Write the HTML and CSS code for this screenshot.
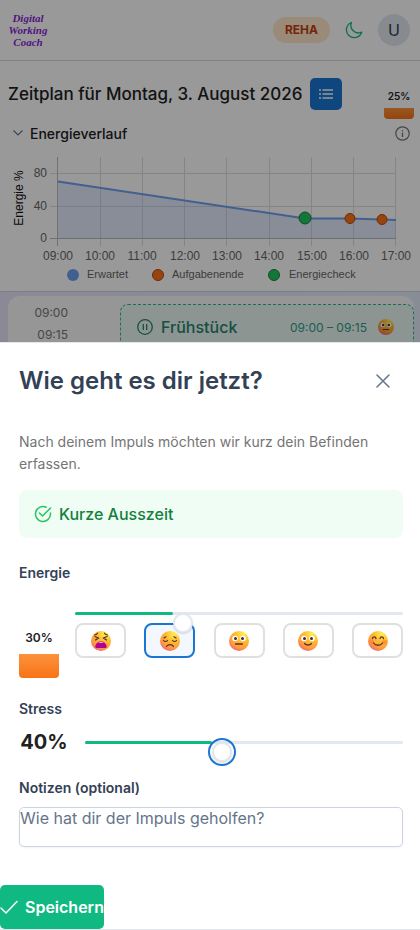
FILE: index.html
```html
<!DOCTYPE html>
<html lang="de">
<head>
    <meta charset="utf-8">
    <meta name="viewport" content="width=device-width, initial-scale=1">
    <title>Digital Working Coach</title>
    <link rel="stylesheet" href="styles.css">
</head>
<body>

    <!-- Emoji faces -->
    <svg class="sprite" aria-hidden="true">
        <defs>
            <radialGradient id="face" cx="0.7" cy="0.15" r="0.95">
                <stop offset="0" stop-color="#fff04e"/>
                <stop offset="0.45" stop-color="#ffb72e"/>
                <stop offset="0.75" stop-color="#ff9a3c"/>
                <stop offset="1" stop-color="#e8607c"/>
            </radialGradient>
            <symbol id="face-awful" viewBox="0 0 20 20">
                <circle cx="10" cy="10" r="10" fill="url(#face)"/>
                <path d="M4 5.500l3.500 1.500L4.500 9M16 5.500l-3.500 1.500 3 2M3.500 4c1.500-.3 2.500-.8 3-1.800M16.500 4c-1.500-.3-2.500-.8-3-1.800" fill="none" stroke="#4a2637" stroke-width="1.200" stroke-linecap="round"/>
                <path d="M5.500 17c-1 0-1.300-.6-1.200-1.400C4.600 12.600 7 10.500 10 10.500s5.400 2.100 5.700 5.100c.1.800-.2 1.400-1.200 1.400z" fill="#b5008f"/>
                <path d="M7 12c1.500-1 4.500-1 6 0z" fill="#fff"/>
            </symbol>
            <symbol id="face-sad" viewBox="0 0 20 20">
                <circle cx="10" cy="10" r="10" fill="url(#face)"/>
                <path d="M3.500 9.500c1 1.300 3 1.300 4 0M12.500 9.500c1 1.300 3 1.300 4 0M6.500 15.500c1.500-2.600 5.500-2.600 7 0M4 7l2-1.200M16 7l-2-1.200" fill="none" stroke="#5b3035" stroke-width="1.200" stroke-linecap="round"/>
            </symbol>
            <symbol id="face-neutral" viewBox="0 0 20 20">
                <circle cx="10" cy="10" r="10" fill="url(#face)"/>
                <circle cx="6" cy="7.500" r="2.800" fill="#fff"/>
                <circle cx="14" cy="7.500" r="2.800" fill="#fff"/>
                <circle cx="6.500" cy="7.500" r="1.500" fill="#4a2637"/>
                <circle cx="13.500" cy="7.500" r="1.500" fill="#4a2637"/>
                <path d="M6.500 13h7" stroke="#5b3035" stroke-width="1.300" stroke-linecap="round"/>
            </symbol>
            <symbol id="face-smile" viewBox="0 0 20 20">
                <circle cx="10" cy="10" r="10" fill="url(#face)"/>
                <circle cx="6" cy="7.500" r="2.800" fill="#fff"/>
                <circle cx="14" cy="7.500" r="2.800" fill="#fff"/>
                <circle cx="6.500" cy="7.500" r="1.500" fill="#4a2637"/>
                <circle cx="13.500" cy="7.500" r="1.500" fill="#4a2637"/>
                <path d="M6.500 12.500c1.700 2 5.300 2 7 0" fill="none" stroke="#5b3035" stroke-width="1.300" stroke-linecap="round"/>
            </symbol>
            <symbol id="face-happy" viewBox="0 0 20 20">
                <circle cx="10" cy="10" r="10" fill="url(#face)"/>
                <circle cx="3.500" cy="11" r="2.500" fill="#ff7a45" opacity="0.6"/>
                <circle cx="16.500" cy="11" r="2.500" fill="#ff7a45" opacity="0.6"/>
                <path d="M4.500 7.500c.4-2.300 3-2.300 3.500 0M12 7.500c.4-2.300 3-2.300 3.500 0M5.500 12c2 3 7 3 9 0" fill="none" stroke="#5b3035" stroke-width="1.300" stroke-linecap="round"/>
            </symbol>
        </defs>
    </svg>

    <header class="topbar">
        <a class="logo" href="#" aria-label="Digital Working Coach">
            <span>Digital</span>
            <span>Working</span>
            <span>Coach</span>
        </a>
        <div class="topbar-actions">
            <span class="tag">REHA</span>
            <button class="theme-btn" aria-label="Dunkelmodus">
                <svg width="18" height="18" viewBox="0 0 18 18"><path d="M6.500 1.500A7.800 7.800 0 1 0 16.700 11 7.400 7.400 0 0 1 6.500 1.500z" fill="none" stroke="currentColor" stroke-width="1.300" stroke-linejoin="round"/></svg>
            </button>
            <button class="avatar">U</button>
        </div>
    </header>

    <main>
        <section class="plan-head">
            <div class="plan-title">
                <h1>Zeitplan für Montag, 3. August 2026</h1>
                <button class="list-btn" aria-label="Liste">
                    <svg width="16" height="16" viewBox="0 0 16 16"><path d="M1 4h2M1 8h2M1 12h2M4.500 4H15M4.500 8H15M4.500 12H15" stroke="currentColor" stroke-width="1.500"/></svg>
                </button>
            </div>
            <div class="battery battery-small">
                <span>25%</span>
                <div class="battery-fill"></div>
            </div>
        </section>

        <section class="chart-panel">
            <div class="chart-head">
                <button class="toggle">
                    <svg width="10" height="6" viewBox="0 0 10 6"><path d="M0.500 0.500L5 5l4.500-4.500" fill="none" stroke="#64748b" stroke-width="1.200"/></svg>
                    Energieverlauf
                </button>
                <button class="info-btn" aria-label="Info">
                    <svg width="15" height="15" viewBox="0 0 15 15"><circle cx="7.500" cy="7.500" r="6.700" fill="none" stroke="currentColor" stroke-width="1.200"/><path d="M7.500 6.500V11M7.500 4v1.200" stroke="currentColor" stroke-width="1.300"/></svg>
                </button>
            </div>
            <svg class="chart" viewBox="0 0 420 141">
                <g stroke="#dedede">
                    <path d="M100.500 7v89M142.500 7v89M184.500 7v89M226.500 7v89M269.500 7v89M311.500 7v89M353.500 7v89M395.500 7v89"/>
                    <path d="M50 23.500h346M50 56.500h346"/>
                </g>
                <path d="M57.500 7v89M50 88.500h346" stroke="#bdbdbd"/>
                <path d="M58 31.500L305 68.500h45l46 1.500v18.500H58z" fill="#739fef" fill-opacity="0.200"/>
                <path d="M58 31.500L305 68.500h45l46 1.500" fill="none" stroke="#6f9ff2" stroke-width="2"/>
                <circle cx="305" cy="68" r="6" fill="#22c55e" stroke="#15803d"/>
                <circle cx="350" cy="68.500" r="5" fill="#f97316" stroke="#c2410c"/>
                <circle cx="382" cy="69.500" r="5" fill="#f97316" stroke="#c2410c"/>
                <text class="axis-title" transform="translate(23 48) rotate(-90)">Energie %</text>
                <g class="tick tick-y">
                    <text x="47" y="27">80</text>
                    <text x="47" y="60">40</text>
                    <text x="47" y="92">0</text>
                </g>
                <g class="tick tick-x">
                    <text x="58" y="110">09:00</text>
                    <text x="100" y="110">10:00</text>
                    <text x="142" y="110">11:00</text>
                    <text x="185" y="110">12:00</text>
                    <text x="227" y="110">13:00</text>
                    <text x="269" y="110">14:00</text>
                    <text x="312" y="110">15:00</text>
                    <text x="354" y="110">16:00</text>
                    <text x="396" y="110">17:00</text>
                </g>
                <g class="legend">
                    <circle cx="73" cy="125" r="6" fill="#6f9ff2"/>
                    <text x="87" y="128">Erwartet</text>
                    <circle cx="158" cy="125" r="5.500" fill="#f97316" stroke="#c2410c"/>
                    <text x="172" y="128">Aufgabenende</text>
                    <circle cx="274" cy="125" r="5.500" fill="#22c55e" stroke="#15803d"/>
                    <text x="289" y="128">Energiecheck</text>
                </g>
            </svg>
        </section>

        <section class="timeline">
            <div class="timeline-card">
                <div class="times">
                    <span>09:00</span>
                    <span>09:15</span>
                </div>
                <div class="entry">
                    <svg width="16" height="16" viewBox="0 0 16 16"><circle cx="8" cy="8" r="7.300" fill="none" stroke="currentColor" stroke-width="1.300"/><path d="M6.300 5v6M9.700 5v6" stroke="currentColor" stroke-width="1.300"/></svg>
                    <span class="entry-name">Frühstück</span>
                    <span class="entry-time">09:00 – 09:15</span>
                    <svg width="16" height="16"><use href="#face-neutral"/></svg>
                </div>
            </div>
        </section>
    </main>

    <div class="mask"></div>

    <!-- Check-in drawer -->
    <form class="drawer" role="dialog" aria-labelledby="drawer-title">
        <div class="drawer-head">
            <h2 id="drawer-title">Wie geht es dir jetzt?</h2>
            <button type="button" class="close-btn" aria-label="Schließen">
                <svg width="14" height="14" viewBox="0 0 14 14"><path d="M1 1l12 12M13 1L1 13" stroke="currentColor" stroke-width="1.500" stroke-linecap="round"/></svg>
            </button>
        </div>

        <div class="drawer-body">
            <p class="intro">Nach deinem Impuls möchten wir kurz dein Befinden erfassen.</p>
            <div class="impulse">
                <svg width="18" height="18" viewBox="0 0 18 18"><path d="M16.500 8v1A7.500 7.500 0 1 1 12.200 2.200M5.500 8l3 3 8-8" fill="none" stroke="currentColor" stroke-width="1.500" stroke-linecap="round" stroke-linejoin="round"/></svg>
                Kurze Ausszeit
            </div>

            <label class="field-label" for="energy">Energie</label>
            <div class="energy-row">
                <div class="battery">
                    <span>30%</span>
                    <div class="battery-fill"></div>
                </div>
                <div class="energy-control">
                    <div class="slider">
                        <div class="slider-range" style="width: 30%"></div>
                        <input type="range" id="energy" min="0" max="100" value="30">
                    </div>
                    <div class="faces">
                        <button type="button" class="face" aria-label="Sehr schlecht"><svg width="20" height="20"><use href="#face-awful"/></svg></button>
                        <button type="button" class="face selected" aria-label="Schlecht"><svg width="20" height="20"><use href="#face-sad"/></svg></button>
                        <button type="button" class="face" aria-label="Neutral"><svg width="20" height="20"><use href="#face-neutral"/></svg></button>
                        <button type="button" class="face" aria-label="Gut"><svg width="20" height="20"><use href="#face-smile"/></svg></button>
                        <button type="button" class="face" aria-label="Sehr gut"><svg width="20" height="20"><use href="#face-happy"/></svg></button>
                    </div>
                </div>
            </div>

            <label class="field-label" for="stress">Stress</label>
            <div class="stress-row">
                <span class="stress-value">40%</span>
                <div class="slider focused">
                    <div class="slider-range" style="width: 40%"></div>
                    <input type="range" id="stress" min="0" max="100" value="40">
                </div>
            </div>

            <label class="field-label" for="notes">Notizen (optional)</label>
            <textarea id="notes" placeholder="Wie hat dir der Impuls geholfen?"></textarea>
        </div>

        <div class="drawer-foot">
            <button type="submit" class="save-btn">
                <svg width="18" height="14" viewBox="0 0 18 14"><path d="M1 8l5 5L17 1.500" fill="none" stroke="currentColor" stroke-width="1.500" stroke-linecap="round" stroke-linejoin="round"/></svg>
                Speichern
            </button>
        </div>
    </form>

</body>
</html>
```

FILE: styles.css
```css
* {
    box-sizing: border-box;
}
body {
    margin: 0;
    font-family: Inter, "Liberation Sans", sans-serif;
    font-size: 14px;
    color: #212121;
    background-color: #fff;
    height: 100vh;
    overflow: hidden;
}
h1, h2, p {
    margin: 0;
}
button {
    font-family: inherit;
    border: 0;
    padding: 0;
    background: none;
    cursor: pointer;
}
svg {
    display: block;
    flex: none;
}
.sprite {
    position: absolute;
    width: 0;
    height: 0;
}

/* Header */
.topbar {
    display: flex;
    align-items: center;
    justify-content: space-between;
    height: 61px;
    padding: 0 10px 0 8px;
    border-bottom: 1px solid #d8d8d8;
}
.logo {
    display: flex;
    flex-direction: column;
    align-items: center;
    width: 40px;
    font-family: "Liberation Serif", serif;
    font-size: 11px;
    line-height: 12px;
    font-weight: bold;
    font-style: italic;
    color: #8b1fd6;
    text-decoration: none;
}
.topbar-actions {
    display: flex;
    align-items: center;
    gap: 15px;
}
.tag {
    padding: 0 12px;
    border-radius: 13px;
    background-color: #ffe6cc;
    color: #c2410c;
    font-size: 12px;
    font-weight: 700;
    line-height: 26px;
}
.theme-btn {
    color: #10b981;
}
.avatar {
    width: 32px;
    height: 32px;
    border-radius: 50%;
    background-color: #e2e8f0;
    color: #334155;
    font-size: 16px;
}

/* Plan title */
.plan-head {
    display: flex;
    justify-content: space-between;
    align-items: flex-start;
    padding: 17px 6px 0 8px;
}
.plan-title {
    display: flex;
    align-items: center;
    gap: 8px;
    white-space: nowrap;
}
h1 {
    font-size: 17px;
    font-weight: 500;
}
.list-btn {
    display: grid;
    place-items: center;
    width: 32px;
    height: 32px;
    border-radius: 5px;
    background-color: #1976d2;
    color: #fff;
}
.battery {
    width: 40px;
    text-align: center;
    font-size: 12px;
    font-weight: 600;
    line-height: 16px;
}
.battery-fill {
    height: 24px;
    margin-top: 8px;
    border-radius: 0 0 4px 4px;
    background: linear-gradient(#fb923c, #f97316);
}
.battery-small {
    width: 30px;
    padding-top: 10px;
    font-size: 10px;
}
.battery-small .battery-fill {
    height: 11px;
    margin-top: 4px;
}

/* Chart */
.chart-head {
    display: flex;
    align-items: center;
    justify-content: space-between;
    padding: 0 10px 0 13px;
    height: 28px;
}
.toggle {
    display: flex;
    align-items: center;
    gap: 7px;
    font-size: 14px;
    font-weight: 500;
    color: #212121;
}
.info-btn {
    color: #757575;
}
.chart {
    width: 100%;
    margin-top: 3px;
}
.chart text {
    font-family: "Liberation Sans", sans-serif;
    font-size: 12px;
    fill: #666;
}
.chart .axis-title {
    fill: #111;
    text-anchor: middle;
}
.tick-y text {
    text-anchor: end;
}
.tick-x text {
    text-anchor: middle;
}
.chart .legend text {
    font-size: 11px;
}

/* Timeline */
.timeline {
    padding: 4px 6px 0 8px;
    border-top: 1px solid #cbd5e1;
    background: linear-gradient(90deg, #e9e5fa, #e3ecf8);
}
.timeline-card {
    display: flex;
    justify-content: space-between;
    padding: 8px 0 0 24px;
    border-radius: 12px;
    background-color: #fafafa;
}
.times {
    display: flex;
    flex-direction: column;
    width: 36px;
    text-align: right;
    font-size: 12px;
    line-height: 22px;
    margin-top: -2px;
    color: #757575;
}
.entry {
    display: flex;
    align-items: center;
    width: 294px;
    height: 46px;
    padding: 0 19px 0 16px;
    border: 1px dashed #2bb99a;
    border-radius: 8px;
    background-color: #ecf8f5;
    color: #23856d;
}
.entry-name {
    flex: 1;
    margin-left: 8px;
    font-size: 16px;
    font-weight: 500;
}
.entry-time {
    margin-right: 11px;
    font-size: 12px;
    color: #2a9d82;
}
.mask {
    position: fixed;
    inset: 0;
    background-color: rgba(0, 0, 0, 0.4);
}

/* Drawer */
.drawer {
    position: fixed;
    left: 0;
    right: 0;
    bottom: 0;
    overflow: hidden;
    border-top: 1px solid #e2e8f0;
    border-bottom: 1px solid #e2e8f0;
    background-color: #fff;
    color: #334155;
}
.drawer-head {
    display: flex;
    align-items: center;
    justify-content: space-between;
    padding: 18px 17px 18px 19px;
}
h2 {
    font-size: 24px;
    line-height: 40px;
    font-weight: 600;
}
.close-btn {
    display: grid;
    place-items: center;
    width: 40px;
    height: 40px;
    color: #64748b;
}
.drawer-body {
    padding: 12px 17px 38px 19px;
}
.intro {
    font-size: 14px;
    line-height: 22px;
    color: #757575;
}
.impulse {
    display: flex;
    align-items: center;
    gap: 7px;
    height: 48px;
    margin: 15px 0 24px;
    padding: 0 15px;
    border-radius: 8px;
    background-color: #f0fdf4;
    color: #15803d;
    font-size: 16px;
    font-weight: 500;
}
.impulse svg {
    color: #22c55e;
}
.field-label {
    display: block;
    font-size: 14px;
    font-weight: 600;
    line-height: 22px;
}
.energy-row {
    display: flex;
    align-items: flex-end;
    gap: 16px;
    margin: 28px 0 20px;
}
.energy-row .battery {
    color: #212121;
}
.energy-control {
    flex: 1;
    padding-bottom: 20px;
}
.slider {
    position: relative;
    flex: 1;
    height: 3px;
    border-radius: 2px;
    background-color: #e2e8f0;
}
.slider-range {
    height: 3px;
    border-radius: 2px;
    background-color: #10b981;
}
/* Wider than the track by one thumb, so the handle hangs off the end of the range */
.slider input {
    position: absolute;
    top: 0;
    left: 0;
    width: calc(100% + 20px);
    height: 22px;
    margin: 0;
    background: none;
    appearance: none;
    outline: none;
}
.slider input::-webkit-slider-thumb {
    appearance: none;
    width: 20px;
    height: 20px;
    border: 2px solid #e2e8f0;
    border-radius: 50%;
    background-color: #fff;
    box-shadow: 0 1px 2px rgba(0, 0, 0, 0.15);
}
.slider.focused input::-webkit-slider-thumb {
    outline: 2px solid #1976d2;
    outline-offset: 2px;
}
.faces {
    display: flex;
    justify-content: space-between;
    margin-top: 8px;
}
.face {
    display: grid;
    place-items: center;
    width: 51px;
    height: 35px;
    border: 2px solid #e0e0e0;
    border-radius: 8px;
    background-color: #fff;
}
.face.selected {
    border-color: #1976d2;
    background-color: #f3f7ff;
}
.stress-row {
    display: flex;
    align-items: center;
    gap: 16px;
    height: 44px;
    margin-bottom: 13px;
}
.stress-value {
    width: 50px;
    text-align: center;
    font-size: 20px;
    font-weight: 700;
    color: #212121;
}
textarea {
    display: block;
    width: 100%;
    height: 40px;
    margin-top: 8px;
    padding: 0;
    border: 1px solid #cbd5e1;
    border-radius: 5px;
    font-family: inherit;
    font-size: 16px;
    line-height: 20px;
    color: #334155;
    resize: none;
    box-shadow: 0 1px 2px rgba(18, 18, 23, 0.05);
}
textarea::placeholder {
    color: #64748b;
}
.save-btn {
    display: flex;
    align-items: center;
    gap: 7px;
    height: 44px;
    border-radius: 5px;
    background-color: #10b981;
    color: #fff;
    font-size: 16px;
    font-weight: 600;
}
```
